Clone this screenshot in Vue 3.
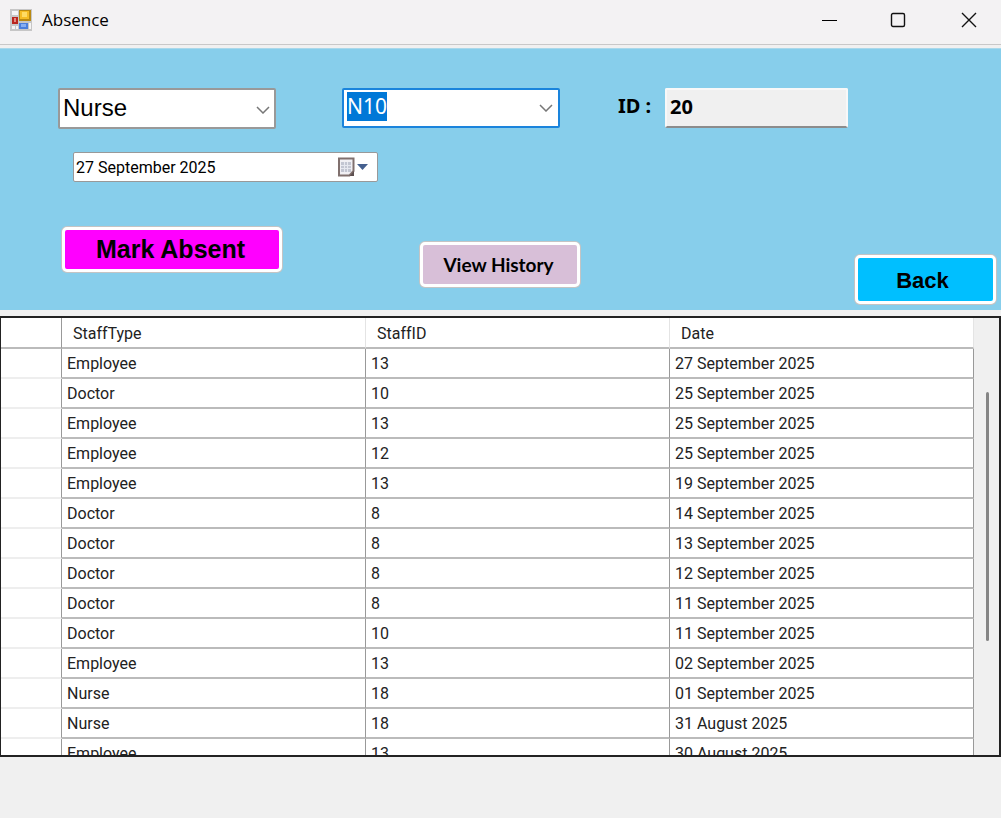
<script setup>
import { onMounted, ref } from 'vue'

const staffType = ref('Nurse')
const staffCode = ref('N10')
const staffId = ref('20')
const date = ref('27 September 2025')
const codeInput = ref(null)
const scroll = { before: 17, size: 57, after: 26 }

const rows = [
  ['Employee', 13, '27 September 2025'],
  ['Doctor', 10, '25 September 2025'],
  ['Employee', 13, '25 September 2025'],
  ['Employee', 12, '25 September 2025'],
  ['Employee', 13, '19 September 2025'],
  ['Doctor', 8, '14 September 2025'],
  ['Doctor', 8, '13 September 2025'],
  ['Doctor', 8, '12 September 2025'],
  ['Doctor', 8, '11 September 2025'],
  ['Doctor', 10, '11 September 2025'],
  ['Employee', 13, '02 September 2025'],
  ['Nurse', 18, '01 September 2025'],
  ['Nurse', 18, '31 August 2025'],
  ['Employee', 13, '30 August 2025'],
]

onMounted(() => {
  codeInput.value.focus()
  codeInput.value.select()
})
</script>

<template>
  <div class="window">
    <header class="titlebar">
      <svg class="app-icon" width="22" height="22" viewBox="0 0 22 22" aria-hidden="true">
        <rect width="22" height="22" fill="#c6c6c6" />
        <rect x="2" y="2" width="6" height="4" fill="#f4f4f4" />
        <rect x="2" y="8" width="6" height="7" fill="#b9251d" />
        <rect x="4" y="9" width="2" height="4" fill="#e58a80" />
        <rect x="2" y="17" width="3" height="3" fill="#f4f4f4" />
        <rect x="6" y="17" width="2" height="3" fill="#f4f4f4" />
        <rect x="9" y="1" width="12" height="11" fill="#b98a12" />
        <rect x="10" y="2" width="9" height="8" fill="#f5bd24" />
        <rect x="12" y="3" width="5" height="5" fill="#ffdc63" />
        <rect x="9" y="14" width="9" height="6" fill="#4a7fdc" />
        <rect x="11" y="15" width="5" height="3" fill="#86aef2" />
        <rect x="19" y="14" width="2" height="6" fill="#f4f4f4" />
      </svg>
      <h1>Absence</h1>
      <nav class="controls" aria-label="Window">
        <button type="button" aria-label="Minimize">
          <svg width="16" height="16" viewBox="0 0 16 16"><path d="M0 8.5H15" stroke="#000" /></svg>
        </button>
        <button type="button" aria-label="Maximize">
          <svg width="16" height="16" viewBox="0 0 16 16"><rect x="1.500" y="1.500" width="13" height="13" rx="1.500" fill="none" stroke="#111" stroke-width="1.400" /></svg>
        </button>
        <button type="button" aria-label="Close">
          <svg width="16" height="16" viewBox="0 0 16 16"><path d="M1 1L15 15M15 1L1 15" stroke="#111" stroke-width="1.400" /></svg>
        </button>
      </nav>
    </header>

    <form class="panel" @submit.prevent>
      <div class="fields">
        <div class="combo">
          <select v-model="staffType" aria-label="Staff type">
            <option>Nurse</option>
            <option>Doctor</option>
            <option>Employee</option>
          </select>
          <svg class="chevron" width="14" height="8" viewBox="0 0 14 8"><path d="M1 1L7 7L13 1" /></svg>
        </div>
        <div class="combo editable">
          <input ref="codeInput" v-model="staffCode" type="text" role="combobox" aria-expanded="false" aria-label="Staff code" />
          <button type="button" class="drop" aria-label="Show codes">
            <svg width="14" height="8" viewBox="0 0 14 8"><path d="M1 1L7 7L13 1" /></svg>
          </button>
        </div>
        <label class="id-label" for="staff-id">ID :</label>
        <input id="staff-id" v-model="staffId" class="id-box" type="text" readonly />
      </div>

      <div class="date">
        <input v-model="date" type="text" aria-label="Date" />
        <button type="button" aria-label="Open calendar">
          <svg width="32" height="20" viewBox="0 0 32 20">
            <path d="M1 1.5H15.5V14L11.5 18.5H1Z" fill="#f1f0f4" stroke="#80706e" stroke-width="2" />
            <path d="M16 14V19H11.5Z" fill="#5d5050" />
            <path d="M3 5H13V15H3Z" fill="#c3c6d2" />
            <path d="M3 8.5H13M3 11.5H13M6.5 5V15M9.5 5V15" stroke="#e6e8f0" />
            <path d="M19 7H30L24.5 13Z" fill="#45608f" />
          </svg>
        </button>
      </div>

      <div class="actions">
        <button type="button" class="action mark">Mark Absent</button>
        <button type="button" class="action history">View History</button>
        <button type="button" class="action back">Back</button>
      </div>
    </form>

    <main class="grid">
      <div class="viewport">
        <table>
          <thead>
            <tr>
              <td class="stub"></td>
              <th scope="col">StaffType</th>
              <th scope="col">StaffID</th>
              <th scope="col">Date</th>
            </tr>
          </thead>
          <tbody>
            <tr v-for="(row, i) in rows" :key="i">
              <td class="stub"></td>
              <td v-for="(cell, j) in row" :key="j">{{ cell }}</td>
            </tr>
          </tbody>
        </table>
      </div>
      <div class="track">
        <div :style="{ flexGrow: scroll.before }"></div>
        <div class="thumb" :style="{ flexGrow: scroll.size }"></div>
        <div :style="{ flexGrow: scroll.after }"></div>
      </div>
    </main>
  </div>
</template>

<style>
body {
  margin: 0;
  background: #f0f0f0;
}
</style>

<style scoped>
* {
  box-sizing: border-box;
}
.window {
  display: flex;
  flex-direction: column;
  height: 100vh;
  padding-bottom: 61px;
  background: #f0f0f0;
  color: #000;
  font-family: Roboto, "Liberation Sans", sans-serif;
  font-size: 16px;
}
button,
input,
select {
  margin: 0;
  padding: 0;
  border: 0;
  outline: 0;
  background: none;
  color: inherit;
  font: inherit;
}
svg {
  display: block;
}
.titlebar {
  display: flex;
  flex: none;
  align-items: center;
  height: 45px;
  padding: 0 0 4px 10px;
  border-bottom: 1px solid #c8c8c8;
  background: #f3f2f3;
}
h1 {
  margin: 0 0 0 10px;
  font: 400 17px/24px "Open Sans", "Noto Sans", sans-serif;
}
.controls {
  display: flex;
  margin-left: auto;
}
.controls button {
  display: grid;
  place-items: center;
  width: 70px;
  height: 40px;
}
.controls button:last-child {
  width: 64px;
}
.controls button:nth-child(2) {
  width: 74px;
  padding-right: 4px;
}
.controls button:first-child {
  width: 66px;
}
.panel {
  flex: none;
  margin-top: 3px;
  padding: 39px 5px 6px 58px;
  border-top: 1px solid #a9d8ea;
  background: #87ceeb;
}
.fields {
  display: flex;
  align-items: flex-start;
}
.combo {
  display: grid;
  width: 218px;
  height: 41px;
  margin-right: 66px;
  border: 2px solid #999;
  border-radius: 2px;
  background: #fff;
}
.combo select {
  grid-area: 1 / 1;
  padding: 0 28px 3px 3px;
  appearance: none;
  font: 24px "Liberation Sans", sans-serif;
}
.chevron {
  grid-area: 1 / 1;
  place-self: center end;
  margin: 3px 4px 0 0;
  pointer-events: none;
}
.chevron path,
.drop path {
  fill: none;
  stroke: #777;
  stroke-width: 1.5;
}
.editable {
  grid-template-columns: 1fr 24px;
  width: 218px;
  height: 40px;
  margin-right: 58px;
  border-color: #1a84dc;
}
.editable input {
  min-width: 0;
  height: 29px;
  margin: 2px 0 0 3px;
  font: 21px/29px "Noto Sans", sans-serif;
}
.editable input::selection {
  background: #0078d7;
  color: #fff;
}
.drop {
  display: grid;
  place-items: center;
}
.id-label,
.id-box {
  font: 700 20px/36px "Noto Sans", sans-serif;
}
.id-label {
  width: 47px;
}
.id-box {
  width: 183px;
  height: 40px;
  padding: 0 0 3px 3px;
  border: 2px solid #f8f8f8;
  border-bottom-color: #8c8c8c;
  border-radius: 2px;
  background: #f0f0f0;
}
.date {
  display: flex;
  align-items: center;
  width: 305px;
  height: 30px;
  margin: 23px 0 0 15px;
  padding: 0 7px 0 2px;
  border: 1px solid #999;
  border-radius: 2px;
  background: #fff;
}
.date input {
  flex: 1;
  min-width: 0;
}
.actions {
  display: flex;
  align-items: flex-start;
  margin: 45px 0 0 4px;
}
.action {
  padding-right: 3px;
  border: 3px solid #fff;
  border-radius: 5px;
  box-shadow: 0 0 0 1px #c4c4c4;
}
.mark {
  width: 220px;
  height: 45px;
  background: #f0f;
  font: 700 25px "Liberation Sans", sans-serif;
}
.history {
  width: 160px;
  height: 45px;
  margin: 15px 0 0 138px;
  background: #d8bfd8;
  font: 700 19px Lato, sans-serif;
}
.back {
  width: 141px;
  height: 49px;
  margin: 28px 0 0 auto;
  padding: 2px 6px 0 0;
  background: #00bfff;
  font: 700 22px "Liberation Sans", sans-serif;
}
.grid {
  display: flex;
  flex: 1;
  min-height: 0;
  margin-top: 6px;
  border: 2px solid #222;
  border-width: 2px 2px 2px 1px;
}
.viewport {
  flex: 1;
  overflow: hidden;
  background: #fff;
}
table {
  width: 100%;
  border-spacing: 0;
  table-layout: fixed;
}
th,
td {
  height: 30px;
  padding: 1px 0 0 5px;
  border-right: 1px solid #999;
  border-bottom: 2px solid #bbb;
  color: #222;
  font-weight: 400;
  line-height: 20px;
  text-align: left;
}
th {
  height: 31px;
  padding-top: 2px;
  padding-left: 11px;
  border-right-color: #e4e4e4;
}
.stub {
  width: 61px;
}
tbody .stub {
  border-bottom-color: #eee;
}
.track {
  display: flex;
  flex-direction: column;
  width: 25px;
  padding-left: 12px;
  background: #f0f0f0;
}
.thumb {
  width: 3px;
  border-radius: 2px;
  background: #858585;
}
</style>
